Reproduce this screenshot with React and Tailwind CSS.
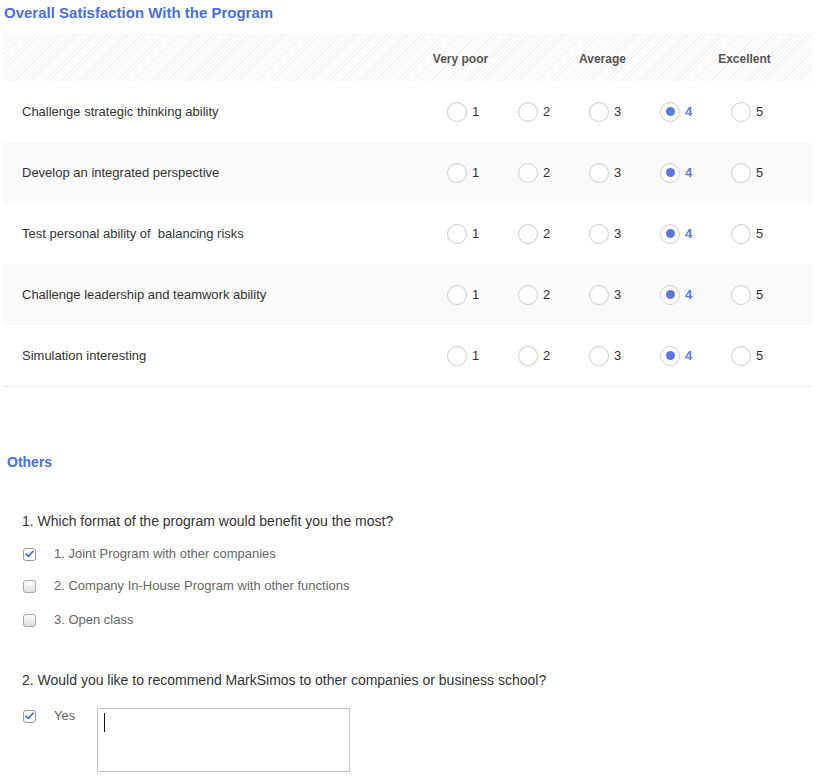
import React from 'react';

const rows = [
  'Challenge strategic thinking ability',
  'Develop an integrated perspective',
  'Test personal ability of  balancing risks',
  'Challenge leadership and teamwork ability',
  'Simulation interesting',
];

const formats = [
  { label: '1. Joint Program with other companies', checked: true },
  { label: '2. Company In-House Program with other functions', checked: false },
  { label: '3. Open class', checked: false },
];

function Radio({ value, selected }) {
  return (
    <div className="flex items-center gap-[5px] pl-[22px]">
      <span className="w-[20px] h-[20px] rounded-full border border-[#cfcfcf] bg-white shadow-[inset_0_1px_1px_rgba(0,0,0,0.04)] flex items-center justify-center">
        {selected && <span className="w-[9px] h-[9px] rounded-full bg-[#5a79de]" />}
      </span>
      <span className={selected ? 'text-[13px] font-bold text-[#5a79de]' : 'text-[13px] text-[#333]'}>
        {value}
      </span>
    </div>
  );
}

function Checkbox({ checked }) {
  return (
    <span
      className={
        checked
          ? 'w-[13px] h-[13px] rounded-[3px] border border-[#9a9a9a] bg-white flex items-center justify-center'
          : 'block w-[13px] h-[13px] rounded-[3px] border border-[#a8a8a8] bg-[linear-gradient(#fdfdfd,#dedede)]'
      }
    >
      {checked && (
        <svg width="9" height="8" viewBox="0 0 9 8" fill="none">
          <path d="M1 4.2L3.4 6.5L8 1.2" stroke="#3f66d4" strokeWidth="1.6" strokeLinecap="round" strokeLinejoin="round" />
        </svg>
      )}
    </span>
  );
}

export default function App() {
  return (
    <div className="w-[818px] h-[781px] bg-white font-['Liberation_Sans',Arial,sans-serif] overflow-hidden">
      {/* Title */}
      <div className="pt-[3px] pl-[4px] text-[15px] leading-5 font-bold text-[#4b6fd1]">
        Overall Satisfaction With the Program
      </div>

      {/* Rating table */}
      <div className="ml-[3px] w-[809px] mt-[11px] border-b border-[#ececec]">
        <div className="h-[47px] grid grid-cols-[422px_repeat(5,71px)_1fr] pt-[17px] text-[12px] leading-4 font-bold text-[#555] bg-[repeating-linear-gradient(135deg,#ffffff_0px,#ffffff_2px,#f3f3f3_2px,#f3f3f3_3px)]">
          <div />
          <div className="text-center">Very poor</div>
          <div />
          <div className="text-center">Average</div>
          <div />
          <div className="text-center">Excellent</div>
        </div>

        {rows.map((label, i) => (
          <div
            key={label}
            className={
              i % 2 === 1
                ? 'h-[61px] grid grid-cols-[422px_repeat(5,71px)_1fr] items-center bg-[#fafafa]'
                : 'h-[61px] grid grid-cols-[422px_repeat(5,71px)_1fr] items-center bg-white'
            }
          >
            <div className="pl-[19px] text-[13px] text-[#333] whitespace-pre">{label}</div>
            {[1, 2, 3, 4, 5].map((n) => (
              <Radio key={n} value={n} selected={n === 4} />
            ))}
            <div />
          </div>
        ))}
      </div>

      {/* Others */}
      <div className="mt-[65px] pl-[7px] text-[14px] leading-5 font-bold text-[#4b6fd1]">Others</div>

      <div className="mt-[39px] pl-[22px] text-[14px] leading-5 text-[#333]">
        1. Which format of the program would benefit you the most?
      </div>

      <div className="mt-[13px] flex flex-col">
        {formats.map((f, i) => (
          <div key={f.label} className={i === 2 ? 'mt-[14px] h-5 flex items-center' : i === 1 ? 'mt-[12px] h-5 flex items-center' : 'h-5 flex items-center'}>
            <div className="pl-[23px] w-[54px]">
              <Checkbox checked={f.checked} />
            </div>
            <span className="text-[13px] text-[#666]">{f.label}</span>
          </div>
        ))}
      </div>

      <div className="mt-[40px] pl-[22px] text-[14px] leading-5 text-[#333]">
        2. Would you like to recommend MarkSimos to other companies or business school?
      </div>

      <div className="mt-[16px] flex items-start">
        <div className="pl-[23px] w-[54px] h-5 flex items-center">
          <Checkbox checked />
        </div>
        <span className="w-[43px] h-5 leading-5 text-[13px] text-[#666]">Yes</span>
        <div className="mt-[2px] w-[253px] h-[64px] border border-[#c8c8c8] bg-white">
          <div className="ml-[6px] mt-[4px] w-px h-[19px] bg-[#111]" />
        </div>
      </div>
    </div>
  );
}
